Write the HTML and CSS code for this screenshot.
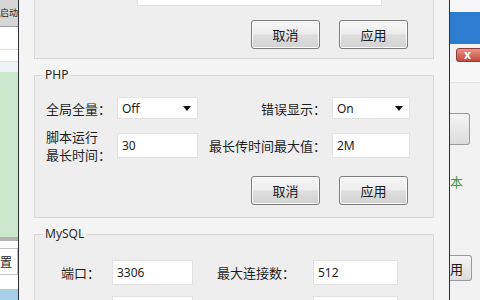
FILE: index.html
```html
<!DOCTYPE html>
<html lang="zh-CN">
<head>
<meta charset="UTF-8">
<meta name="viewport" content="width=device-width, initial-scale=1.0">
<title>环境设置</title>
<link rel="stylesheet" href="styles.css">
</head>
<body>

<div class="desk">

  <!-- window behind, left part -->
  <div class="bg-left">
    <div class="bl-head">启动</div>
    <div class="bl-row bl-row1"></div>
    <div class="bl-row bl-row2"></div>
    <div class="bl-row3"></div>
    <div class="bl-green"></div>
    <div class="bl-sep"></div>
    <div class="bl-gap"></div>
    <div class="bl-cell">置</div>
    <div class="bl-fill"></div>
    <div class="bl-bottom"></div>
  </div>

  <!-- settings dialog -->
  <div class="dialog">

    <div class="panel">
      <div class="panel-field">
        <div class="tb tb-wide"></div>
      </div>
      <div class="btn-row">
        <button class="btn">取消</button>
        <button class="btn">应用</button>
      </div>
    </div>

    <fieldset class="group">
      <legend>PHP</legend>
      <div class="php-grid">
        <div class="lbl">全局全量：</div>
        <div class="sel">Off
          <svg class="arrow" width="8" height="5" viewBox="0 0 8 5"><polygon points="0,0 8,0 4,5" fill="#111"/></svg>
        </div>
        <div class="lbl lbl-r">错误显示：</div>
        <div class="sel">On
          <svg class="arrow" width="8" height="5" viewBox="0 0 8 5"><polygon points="0,0 8,0 4,5" fill="#111"/></svg>
        </div>

        <div class="lbl lbl-2">脚本运行<br>最长时间：</div>
        <div class="tb">30</div>
        <div class="lbl lbl-r">最长传时间最大值：</div>
        <div class="tb">2M</div>
      </div>
      <div class="btn-row btn-row-php">
        <button class="btn">取消</button>
        <button class="btn">应用</button>
      </div>
    </fieldset>

    <fieldset class="group group-mysql">
      <legend>MySQL</legend>
      <div class="mysql-grid">
        <div class="lbl lbl-r">端口：</div>
        <div class="tb">3306</div>
        <div class="lbl lbl-r lbl-r2">最大连接数：</div>
        <div class="tb">512</div>

        <div class="lbl"></div>
        <div class="tb"></div>
        <div class="lbl"></div>
        <div class="tb"></div>
      </div>
    </fieldset>

  </div>

  <!-- window behind, right part -->
  <div class="bg-right">
    <div class="br-top"></div>
    <div class="br-title"></div>
    <div class="br-close-row"><span class="br-close">x</span></div>
    <div class="br-line"></div>
    <div class="br-btn br-btn1"></div>
    <div class="br-ver">本</div>
    <div class="br-btn br-btn2">用</div>
  </div>

</div>

</body>
</html>
```

FILE: styles.css
```css
html, body {
  margin: 0;
}
body {
  width: 480px;
  height: 300px;
  overflow: hidden;
  font-family: "Noto Sans", "Noto Sans CJK SC", sans-serif;
  font-size: 13px;
  color: #1e1e1e;
  background: #f0f0f0;
}
.desk {
  display: flex;
  height: 300px;
}

/* left window */
.bg-left {
  width: 18px;
  flex: none;
  overflow: hidden;
  background: #fff;
  display: flex;
  flex-direction: column;
}
.bl-head {
  height: 26px;
  flex: none;
  background: #d6d6d6;
  border-bottom: 1px solid #9e9e9e;
  font-size: 9px;
  line-height: 26px;
  white-space: nowrap;
  font-family: "Noto Sans CJK SC", sans-serif;
}
.bl-row {
  flex: none;
  border-bottom: 1px solid #e0e0e0;
}
.bl-row1 { height: 22px; }
.bl-row2 { height: 11px; }
.bl-row3 {
  height: 10px;
  flex: none;
  background: #eef3f7;
}
.bl-green {
  height: 165px;
  flex: none;
  background: #cbe7cc;
}
.bl-sep {
  height: 4px;
  flex: none;
  background: #b3b3b3;
}
.bl-gap {
  height: 7px;
  flex: none;
}
.bl-cell {
  height: 25px;
  flex: none;
  display: flex;
  align-items: center;
  border: 1px solid #c4c4c4;
  border-left: none;
  white-space: nowrap;
  font-family: "Noto Sans CJK SC", sans-serif;
  font-size: 12px;
}
.bl-fill {
  height: 14px;
  flex: none;
}
.bl-bottom {
  flex: 1;
  background: #a6d0ea;
}

/* dialog */
.dialog {
  width: 432px;
  flex: none;
  box-sizing: border-box;
  border-left: 1px solid #2c2f33;
  border-right: 1px solid #2c2f33;
  background: #f4f4f4;
  padding: 0 15px;
  overflow: hidden;
}
.panel {
  margin-top: -28px;
  border: 1px solid #d7d7d7;
  background: #eeeeee;
  padding: 11px 25px 9px 0;
}
.panel-field {
  display: flex;
  padding-left: 102px;
}
.tb {
  height: 25px;
  box-sizing: border-box;
  background: #fff;
  border: 1px solid #e2e2e2;
  padding: 0 4px;
  line-height: 23px;
  font-size: 12px;
}
.tb-wide {
  width: 245px;
  height: 22px;
}
.btn-row {
  display: flex;
  justify-content: flex-end;
  gap: 19px;
  margin-top: 14px;
}
.btn {
  width: 69px;
  height: 29px;
  padding: 0;
  border: 1px solid #7c7c7c;
  border-radius: 3px;
  background: linear-gradient(#f7f7f7 0%, #ececec 48%, #dedede 52%, #d2d2d2 100%);
  box-shadow: inset 0 0 0 1px #fbfbfb;
  font-family: "Noto Sans CJK SC", sans-serif;
  font-size: 13px;
  color: #1a1a1a;
}

.group {
  margin: 8px 0 0;
  padding: 14px 23px 12px 11px;
  border: 1px solid #d7d7d7;
  background: #eeeeee;
  min-width: 0;
}
.group legend {
  margin-left: -3px;
  padding: 0 2px;
  line-height: 16px;
  font-size: 12px;
  color: #2a2a2a;
}
.lbl {
  font-family: "Noto Sans CJK SC", sans-serif;
  white-space: nowrap;
  line-height: 17px;
}
.lbl-2 {
  line-height: 18px;
}
.lbl-r {
  text-align: right;
  padding-right: 6px;
}
.php-grid {
  display: grid;
  grid-template-columns: 71px 81px 1fr 78px;
  grid-template-rows: 22px 37px;
  row-gap: 8px;
  align-items: center;
}
.sel {
  height: 22px;
  box-sizing: border-box;
  background: #fff;
  border: 1px solid #e2e2e2;
  padding: 0 6px 0 4px;
  display: flex;
  align-items: center;
  justify-content: space-between;
  font-size: 12px;
}
.btn-row-php {
  margin-top: 12px;
  padding-right: 2px;
}

.group-mysql {
  padding-top: 18px;
}
.mysql-grid {
  display: grid;
  grid-template-columns: 66px 81px 120px 85px;
  grid-auto-rows: 25px;
  row-gap: 11px;
  align-items: center;
}
.mysql-grid .lbl-r {
  padding-right: 12px;
}
.mysql-grid .lbl-r2 {
  padding-right: 18px;
}

/* right window */
.bg-right {
  flex: 1;
  overflow: hidden;
  background: #f2f2f2;
  display: flex;
  flex-direction: column;
}
.br-top {
  height: 12px;
  flex: none;
  background: #f6f6f6;
}
.br-title {
  height: 32px;
  flex: none;
  background: #2c7ccf;
}
.br-close-row {
  height: 14px;
  flex: none;
  margin-top: 4px;
  padding-left: 6px;
  display: flex;
}
.br-close {
  width: 34px;
  flex: none;
  box-sizing: border-box;
  border: 1px solid #8c3a33;
  border-radius: 3px;
  background: linear-gradient(#e7938a, #c5493f);
  color: #fff;
  font-weight: bold;
  font-size: 12px;
  line-height: 11px;
  padding-left: 7px;
}
.br-line {
  height: 20px;
  flex: none;
  border-bottom: 1px solid #e4e4e4;
  background: #f7f7f7;
}
.br-btn {
  flex: none;
  width: 20px;
  box-sizing: border-box;
  border: 1px solid #9a9a9a;
  border-left: none;
  border-radius: 0 3px 3px 0;
  background: linear-gradient(#f5f5f5, #dcdcdc);
  display: flex;
  align-items: center;
  white-space: nowrap;
  font-family: "Noto Sans CJK SC", sans-serif;
  color: #1a1a1a;
  overflow: hidden;
}
.br-btn1 {
  height: 32px;
  margin-top: 30px;
}
.br-ver {
  margin-top: 30px;
  height: 14px;
  line-height: 14px;
  color: #3f9a45;
  font-family: "Noto Sans CJK SC", sans-serif;
  white-space: nowrap;
}
.br-btn2 {
  width: 22px;
  height: 26px;
  margin-top: 66px;
}
```
